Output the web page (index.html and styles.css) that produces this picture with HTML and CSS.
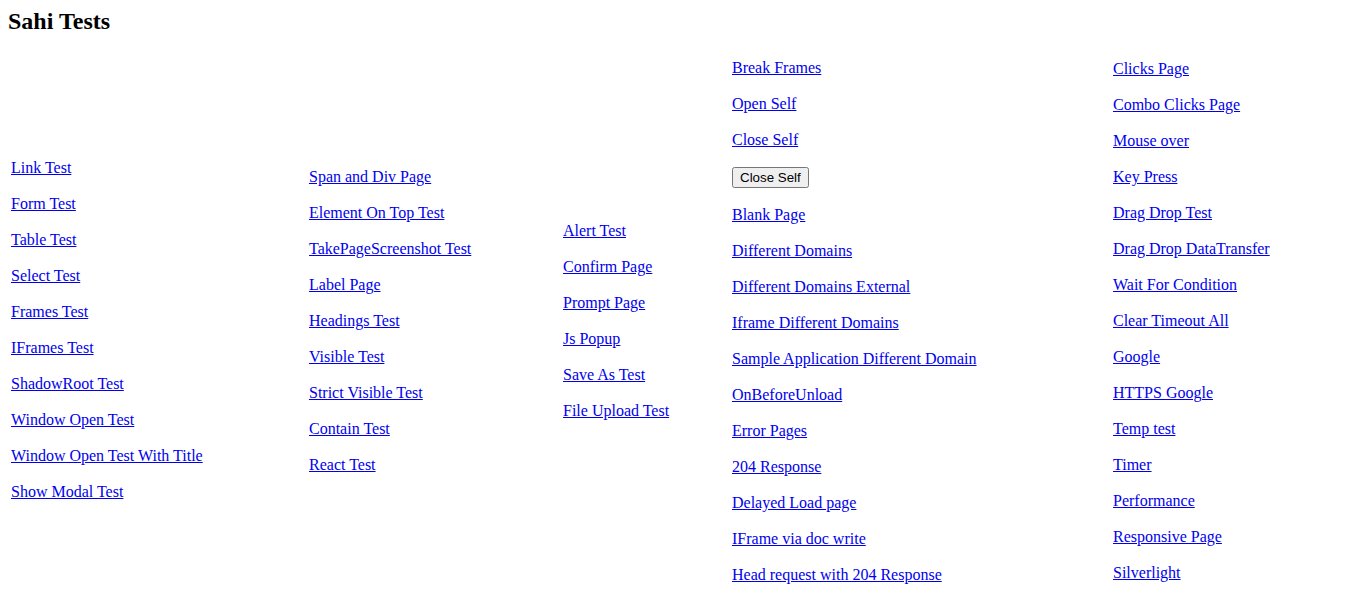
FILE: index.html
```html
<!DOCTYPE html>
<html>
<head>
<meta charset="utf-8">
<title>Sahi Tests</title>
<link rel="stylesheet" href="styles.css">
</head>
<body>
<h2 class="title">Sahi Tests</h2>
<table class="tests">
  <tr>
    <td class="col c1">
      <div class="item"><a href="#">Link Test</a></div>
      <div class="item"><a href="#">Form Test</a></div>
      <div class="item"><a href="#">Table Test</a></div>
      <div class="item"><a href="#">Select Test</a></div>
      <div class="item"><a href="#">Frames Test</a></div>
      <div class="item"><a href="#">IFrames Test</a></div>
      <div class="item"><a href="#">ShadowRoot Test</a></div>
      <div class="item"><a href="#">Window Open Test</a></div>
      <div class="item"><a href="#">Window Open Test With Title</a></div>
      <div class="item last"><a href="#">Show Modal Test</a></div>
    </td>
    <td class="col c2">
      <div class="item"><a href="#">Span and Div Page</a></div>
      <div class="item"><a href="#">Element On Top Test</a></div>
      <div class="item"><a href="#">TakePageScreenshot Test</a></div>
      <div class="item"><a href="#">Label Page</a></div>
      <div class="item"><a href="#">Headings Test</a></div>
      <div class="item"><a href="#">Visible Test</a></div>
      <div class="item"><a href="#">Strict Visible Test</a></div>
      <div class="item"><a href="#">Contain Test</a></div>
      <div class="item"><a href="#">React Test</a></div>
    </td>
    <td class="col c3">
      <div class="item"><a href="#">Alert Test</a></div>
      <div class="item"><a href="#">Confirm Page</a></div>
      <div class="item"><a href="#">Prompt Page</a></div>
      <div class="item"><a href="#">Js Popup</a></div>
      <div class="item"><a href="#">Save As Test</a></div>
      <div class="item"><a href="#">File Upload Test</a></div>
    </td>
    <td class="col c4">
      <div class="item"><a href="#">Break Frames</a></div>
      <div class="item"><a href="#">Open Self</a></div>
      <div class="item"><a href="#">Close Self</a></div>
      <div class="item"><button class="btn" type="button">Close Self</button></div>
      <div class="item"><a href="#">Blank Page</a></div>
      <div class="item"><a href="#">Different Domains</a></div>
      <div class="item"><a href="#">Different Domains External</a></div>
      <div class="item"><a href="#">Iframe Different Domains</a></div>
      <div class="item"><a href="#">Sample Application Different Domain</a></div>
      <div class="item"><a href="#">OnBeforeUnload</a></div>
      <div class="item"><a href="#">Error Pages</a></div>
      <div class="item"><a href="#">204 Response</a></div>
      <div class="item"><a href="#">Delayed Load page</a></div>
      <div class="item"><a href="#">IFrame via doc write</a></div>
      <div class="item"><a href="#">Head request with 204 Response</a></div>
    </td>
    <td class="col c5">
      <div class="item"><a href="#">Clicks Page</a></div>
      <div class="item"><a href="#">Combo Clicks Page</a></div>
      <div class="item"><a href="#">Mouse over</a></div>
      <div class="item"><a href="#">Key Press</a></div>
      <div class="item"><a href="#">Drag Drop Test</a></div>
      <div class="item"><a href="#">Drag Drop DataTransfer</a></div>
      <div class="item"><a href="#">Wait For Condition</a></div>
      <div class="item"><a href="#">Clear Timeout All</a></div>
      <div class="item"><a href="#">Google</a></div>
      <div class="item"><a href="#">HTTPS Google</a></div>
      <div class="item"><a href="#">Temp test</a></div>
      <div class="item"><a href="#">Timer</a></div>
      <div class="item"><a href="#">Performance</a></div>
      <div class="item"><a href="#">Responsive Page</a></div>
      <div class="item"><a href="#">Silverlight</a></div>
    </td>
  </tr>
</table>
</body>
</html>
```
FILE: styles.css
```css
html, body {
  background: #ffffff;
}
body {
  margin: 8px;
  font-family: "Liberation Serif", "Times New Roman", serif;
  font-size: 16px;
  color: #000000;
}
.title {
  margin: 0 0 20.92px 0;
  font-size: 24px;
  font-weight: bold;
}
.tests {
  width: 100%;
  table-layout: fixed;
  border-spacing: 2px;
  border-collapse: separate;
}
.col {
  padding: 1px;
  vertical-align: middle;
}
.c1 { width: 294px; }
.c2 { width: 250px; }
.c3 { width: 165px; }
.c4 { width: 377px; }
.c5 { width: 242px; }
.item {
  margin-bottom: 18px;
  white-space: nowrap;
}
.item.last {
  margin-bottom: 0;
}
.item a {
  color: #0000ee;
  text-decoration: underline;
}
.btn {
  font-family: "Liberation Sans", Arial, sans-serif;
  font-size: 13.333px;
}
```
